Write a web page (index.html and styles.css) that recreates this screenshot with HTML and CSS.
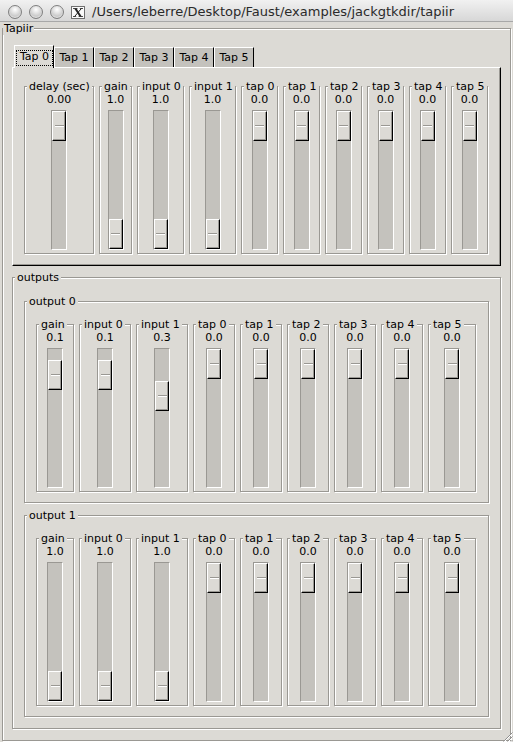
FILE: index.html
```html
<!DOCTYPE html>
<html>
<head>
<meta charset="utf-8">
<title>tapiir</title>
<link rel="stylesheet" href="styles.css">
</head>
<body>
<div class="titlebar">
  <span class="light"></span><span class="light"></span><span class="light"></span>
  <svg class="xicon" width="14" height="13" viewBox="0 0 14 13">
    <rect x="0.5" y="0.5" width="13" height="12" fill="#fafafa" stroke="#707070"/>
    <path d="M3.2 2.5 L5.6 2.5 L10.8 10.5 L8.4 10.5 Z" fill="#222"/>
    <path d="M10.4 2.5 L3.6 10.5" stroke="#222" stroke-width="1"/>
    <path d="M2 2.5 H6.5 M8.8 2.5 H12 M2 10.5 H5.2 M7.6 10.5 H12" stroke="#222" stroke-width="0.8"/>
  </svg>
  <span class="title">/Users/leberre/Desktop/Faust/examples/jackgtkdir/tapiir</span>
</div>
<div class="client">
  <div class="frame f-top">
    <span class="flabel">Tapiir</span>
    <div class="notebook">
      <div class="tabs">
        <div class="tab active"><span class="focus">Tap 0</span></div>
        <div class="tab">Tap 1</div>
        <div class="tab">Tap 2</div>
        <div class="tab">Tap 3</div>
        <div class="tab">Tap 4</div>
        <div class="tab">Tap 5</div>
      </div>
      <div class="page">
        <div class="strips">
          <div class="frame strip k-delay"><span class="flabel">delay (sec)</span><span class="val">0.00</span><div class="trough"><div class="thumb" style="margin-top:0px"><i class="grip"></i></div></div></div>
          <div class="frame strip k-gain"><span class="flabel">gain</span><span class="val">1.0</span><div class="trough"><div class="thumb" style="margin-top:108px"><i class="grip"></i></div></div></div>
          <div class="frame strip k-input"><span class="flabel">input 0</span><span class="val">1.0</span><div class="trough"><div class="thumb" style="margin-top:108px"><i class="grip"></i></div></div></div>
          <div class="frame strip k-input"><span class="flabel">input 1</span><span class="val">1.0</span><div class="trough"><div class="thumb" style="margin-top:108px"><i class="grip"></i></div></div></div>
          <div class="frame strip k-tap"><span class="flabel">tap 0</span><span class="val">0.0</span><div class="trough"><div class="thumb" style="margin-top:0px"><i class="grip"></i></div></div></div>
          <div class="frame strip k-tap"><span class="flabel">tap 1</span><span class="val">0.0</span><div class="trough"><div class="thumb" style="margin-top:0px"><i class="grip"></i></div></div></div>
          <div class="frame strip k-tap"><span class="flabel">tap 2</span><span class="val">0.0</span><div class="trough"><div class="thumb" style="margin-top:0px"><i class="grip"></i></div></div></div>
          <div class="frame strip k-tap"><span class="flabel">tap 3</span><span class="val">0.0</span><div class="trough"><div class="thumb" style="margin-top:0px"><i class="grip"></i></div></div></div>
          <div class="frame strip k-tap"><span class="flabel">tap 4</span><span class="val">0.0</span><div class="trough"><div class="thumb" style="margin-top:0px"><i class="grip"></i></div></div></div>
          <div class="frame strip k-tap"><span class="flabel">tap 5</span><span class="val">0.0</span><div class="trough"><div class="thumb" style="margin-top:0px"><i class="grip"></i></div></div></div>
        </div>
      </div>
    </div>

    <div class="frame outputs">
      <span class="flabel">outputs</span>
      <div class="frame out">
        <span class="flabel">output 0</span>
        <div class="strips">
          <div class="frame strip k-gain"><span class="flabel">gain</span><span class="val">0.1</span><div class="trough"><div class="thumb" style="margin-top:11px"><i class="grip"></i></div></div></div>
          <div class="frame strip k-input"><span class="flabel">input 0</span><span class="val">0.1</span><div class="trough"><div class="thumb" style="margin-top:11px"><i class="grip"></i></div></div></div>
          <div class="frame strip k-input"><span class="flabel">input 1</span><span class="val">0.3</span><div class="trough"><div class="thumb" style="margin-top:32px"><i class="grip"></i></div></div></div>
          <div class="frame strip k-tap"><span class="flabel">tap 0</span><span class="val">0.0</span><div class="trough"><div class="thumb" style="margin-top:0px"><i class="grip"></i></div></div></div>
          <div class="frame strip k-tap"><span class="flabel">tap 1</span><span class="val">0.0</span><div class="trough"><div class="thumb" style="margin-top:0px"><i class="grip"></i></div></div></div>
          <div class="frame strip k-tap"><span class="flabel">tap 2</span><span class="val">0.0</span><div class="trough"><div class="thumb" style="margin-top:0px"><i class="grip"></i></div></div></div>
          <div class="frame strip k-tap"><span class="flabel">tap 3</span><span class="val">0.0</span><div class="trough"><div class="thumb" style="margin-top:0px"><i class="grip"></i></div></div></div>
          <div class="frame strip k-tap"><span class="flabel">tap 4</span><span class="val">0.0</span><div class="trough"><div class="thumb" style="margin-top:0px"><i class="grip"></i></div></div></div>
          <div class="frame strip k-tap"><span class="flabel">tap 5</span><span class="val">0.0</span><div class="trough"><div class="thumb" style="margin-top:0px"><i class="grip"></i></div></div></div>
        </div>
      </div>
      <div class="frame out">
        <span class="flabel">output 1</span>
        <div class="strips">
          <div class="frame strip k-gain"><span class="flabel">gain</span><span class="val">1.0</span><div class="trough"><div class="thumb" style="margin-top:108px"><i class="grip"></i></div></div></div>
          <div class="frame strip k-input"><span class="flabel">input 0</span><span class="val">1.0</span><div class="trough"><div class="thumb" style="margin-top:108px"><i class="grip"></i></div></div></div>
          <div class="frame strip k-input"><span class="flabel">input 1</span><span class="val">1.0</span><div class="trough"><div class="thumb" style="margin-top:108px"><i class="grip"></i></div></div></div>
          <div class="frame strip k-tap"><span class="flabel">tap 0</span><span class="val">0.0</span><div class="trough"><div class="thumb" style="margin-top:0px"><i class="grip"></i></div></div></div>
          <div class="frame strip k-tap"><span class="flabel">tap 1</span><span class="val">0.0</span><div class="trough"><div class="thumb" style="margin-top:0px"><i class="grip"></i></div></div></div>
          <div class="frame strip k-tap"><span class="flabel">tap 2</span><span class="val">0.0</span><div class="trough"><div class="thumb" style="margin-top:0px"><i class="grip"></i></div></div></div>
          <div class="frame strip k-tap"><span class="flabel">tap 3</span><span class="val">0.0</span><div class="trough"><div class="thumb" style="margin-top:0px"><i class="grip"></i></div></div></div>
          <div class="frame strip k-tap"><span class="flabel">tap 4</span><span class="val">0.0</span><div class="trough"><div class="thumb" style="margin-top:0px"><i class="grip"></i></div></div></div>
          <div class="frame strip k-tap"><span class="flabel">tap 5</span><span class="val">0.0</span><div class="trough"><div class="thumb" style="margin-top:0px"><i class="grip"></i></div></div></div>
        </div>
      </div>
    </div>
  </div>
</div>
<svg class="resize" width="13" height="13" viewBox="0 0 13 13">
  <path d="M12.5 3.5 L3.5 12.5 M12.5 7.5 L7.5 12.5 M12.5 11 L11 12.5" stroke="#8e8e8e" stroke-width="1"/>
  <path d="M12.5 4.5 L4.5 12.5 M12.5 8.5 L8.5 12.5" stroke="#ffffff" stroke-width="1"/>
</svg>
</body>
</html>
```

FILE: styles.css
```css
* { box-sizing: border-box; }
html, body { margin: 0; padding: 0; }
body {
  width: 513px;
  height: 742px;
  overflow: hidden;
  position: relative;
  background: #dcdad5;
  font-family: "DejaVu Sans", "Bitstream Vera Sans", sans-serif;
  font-size: 11px;
  line-height: 13px;
  color: #000;
}

/* Mac-style title bar */
.titlebar {
  height: 22px;
  display: flex;
  align-items: flex-start;
  padding-left: 8px;
  background: linear-gradient(#f1f1f1, #d7d7d7);
  border-bottom: 1px solid #a8a8a8;
}
.light {
  width: 14px;
  height: 14px;
  margin-top: 5px;
  margin-right: 7px;
  border-radius: 50%;
  border: 1px solid #7f7f7f;
  background: radial-gradient(circle at 50% 30%, #ffffff 0, #dedede 40%, #a9a9a9 100%);
  box-shadow: inset 0 -1px 1px rgba(255,255,255,0.6);
}
.xicon { margin-top: 6px; flex: none; }
.title {
  margin-left: 7px;
  margin-top: 4px;
  font-size: 13px;
  line-height: 15px;
  color: #2a2a2a;
  white-space: nowrap;
}

.client { padding-top: 6px; }

/* etched GTK frame */
.frame {
  border: 1px solid #9a9893;
  box-shadow: inset 1px 1px 0 #fff, 1px 1px 0 #fff;
  display: flex;
  flex-direction: column;
}
.flabel {
  align-self: flex-start;
  margin: -7px 0 0 2px;
  padding: 0 2px;
  background: #dcdad5;
  line-height: 13px;
  white-space: nowrap;
}

.f-top {
  margin-left: 2px;
  width: 509px;
  padding: 0 9px 11px 9px;
}
.f-top > .flabel { margin-left: -9px; padding: 0 1px; }

/* notebook */
.notebook { margin-top: 10px; display: flex; flex-direction: column; }
.tabs {
  display: flex;
  align-items: flex-end;
  height: 22px;
  padding-left: 2px;
}
.tab {
  width: 40px;
  height: 20px;
  background: #c4c2bd;
  border-top: 1px solid #fff;
  border-left: 1px solid #fff;
  border-right: 1px solid #000;
  text-align: center;
  line-height: 19px;
}
.tab.active {
  height: 23px;
  margin-bottom: -1px;
  background: #dcdad5;
  position: relative;
  z-index: 1;
  padding: 4px 0 0 1px;
}
.focus {
  display: block;
  width: 37px;
  height: 16px;
  border: 1px dotted #000;
  line-height: 12px;
}
.page {
  border: 1px solid;
  border-color: #fff #000 #000 #fff;
  box-shadow: inset -1px -1px 0 #9a9893;
  padding: 18px 11px 11px 11px;
}

/* slider strips */
.strips {
  display: flex;
  align-items: flex-start;
  gap: 5px;
}
.strip {
  height: 168px;
  align-items: center;
  padding-bottom: 3px;
  flex: none;
}
.val { line-height: 13px; }
.trough {
  margin-top: 4px;
  width: 16px;
  height: 140px;
  border: 1px solid;
  border-color: #9a9893 #fff #fff #9a9893;
  background: #c4c2bd;
}
.thumb {
  width: 14px;
  height: 30px;
  background: #dcdad5;
  border: 1px solid;
  border-color: #fff #000 #000 #fff;
  box-shadow: inset -1px -1px 0 #9a9893;
  display: flex;
  align-items: center;
  justify-content: center;
}
.grip {
  display: block;
  width: 9px;
  height: 2px;
  border-top: 1px solid #9a9893;
  border-bottom: 1px solid #fff;
}

.k-delay { width: 70px; }
.k-gain { width: 33px; }
.k-input { width: 47px; }
.k-tap { width: 37px; }

/* outputs */
.outputs {
  margin-top: 11px;
  padding: 0 11px 11px 11px;
}
.outputs > .flabel { margin-left: -9px; }
.out {
  margin-top: 17px;
  padding: 0 11px 10px 11px;
}
.out > .flabel { margin-left: -9px; }
.out + .out { margin-top: 12px; }
.out .strips { margin-top: 16px; }
.out .k-gain { width: 38px; }
.out .k-input { width: 52px; }
.out .k-tap { width: 42px; }
.out .k-tap:last-child { width: 48px; }

.resize {
  position: absolute;
  right: 0;
  bottom: 0;
}
```
